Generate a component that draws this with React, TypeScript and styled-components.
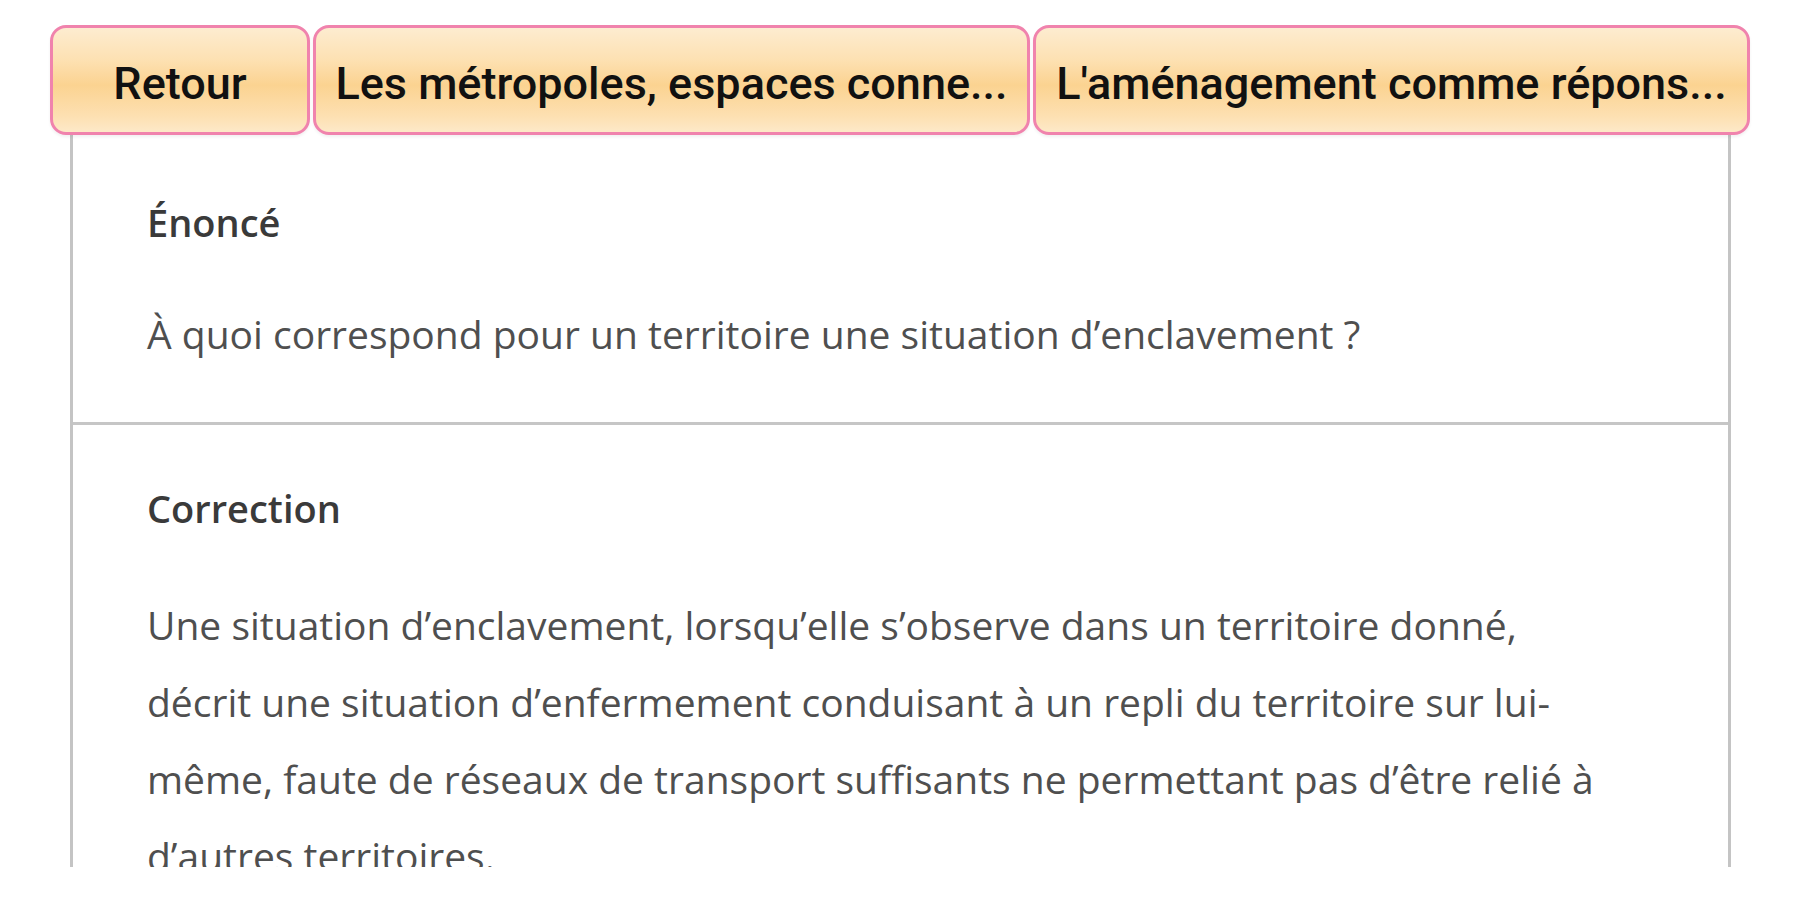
import React from "react";
import styled, { createGlobalStyle } from "styled-components";

const GlobalStyle = createGlobalStyle`
  html, body {
    margin: 0;
    padding: 0;
    background: #ffffff;
  }
  * { box-sizing: border-box; }
`;

const Page = styled.div`
  width: 1800px;
  height: 900px;
  padding: 25px 50px 0 50px;
  overflow: hidden;
  background: #ffffff;
`;

const TabBar = styled.nav`
  display: flex;
  gap: 3px;
  height: 110px;
  position: relative;
  z-index: 2;
`;

const TabButton = styled.button<{ $grow?: boolean }>`
  flex: ${(p) => (p.$grow ? "1 1 0" : "0 0 260px")};
  min-width: 0;
  height: 100%;
  border: 3px solid #f083ad;
  border-radius: 16px;
  background: linear-gradient(
    180deg,
    #fdecd0 0%,
    #fde1b3 30%,
    #fbd391 55%,
    #fde0b2 85%,
    #fde9c8 100%
  );
  box-shadow: 0 2px 3px rgba(0, 0, 0, 0.06);
  padding: 6px 12px 0;
  font-family: Roboto, "Liberation Sans", sans-serif;
  font-weight: 500;
  font-size: 45px;
  color: #111111;
  white-space: nowrap;
  overflow: hidden;
  text-align: center;
  cursor: pointer;
`;

const Panel = styled.section`
  margin: 0 19px 0 20px;
  height: 732px;
  border-left: 3px solid #c4c4c4;
  border-right: 3px solid #c4c4c4;
  overflow: hidden;
  background: #ffffff;
`;

const Block = styled.div<{ $divider?: boolean }>`
  padding: ${(p) => (p.$divider ? "62px 74px 50px" : "58px 74px 0")};
  border-bottom: ${(p) => (p.$divider ? "3px solid #c6c6c6" : "none")};
`;

const Heading = styled.h2`
  margin: 0;
  height: 50px;
  line-height: 50px;
  font-family: "Open Sans", "Noto Sans", sans-serif;
  font-weight: 600;
  font-size: 38px;
  color: #3a3a3a;
`;

const Text = styled.p<{ $gap: number }>`
  margin: ${(p) => p.$gap}px 0 0 0;
  max-width: 1468px;
  line-height: 77px;
  font-family: "Open Sans", "Noto Sans", sans-serif;
  font-weight: 400;
  font-size: 39px;
  color: #4f4f4f;
`;

export default function App() {
  return (
    <>
      <GlobalStyle />
      <Page>
        <TabBar>
          <TabButton>Retour</TabButton>
          <TabButton $grow>Les métropoles, espaces conne...</TabButton>
          <TabButton $grow>L'aménagement comme répons...</TabButton>
        </TabBar>
        <Panel>
          <Block $divider>
            <Heading>Énoncé</Heading>
            <Text $gap={48}>
              À quoi correspond pour un territoire une situation d’enclavement ?
            </Text>
          </Block>
          <Block>
            <Heading>Correction</Heading>
            <Text $gap={53}>
              Une situation d’enclavement, lorsqu’elle s’observe dans un territoire donné,
              décrit une situation d’enfermement conduisant à un repli du territoire sur lui-même,
              faute de réseaux de transport suffisants ne permettant pas d’être relié à
              d’autres territoires.
            </Text>
          </Block>
        </Panel>
      </Page>
    </>
  );
}
